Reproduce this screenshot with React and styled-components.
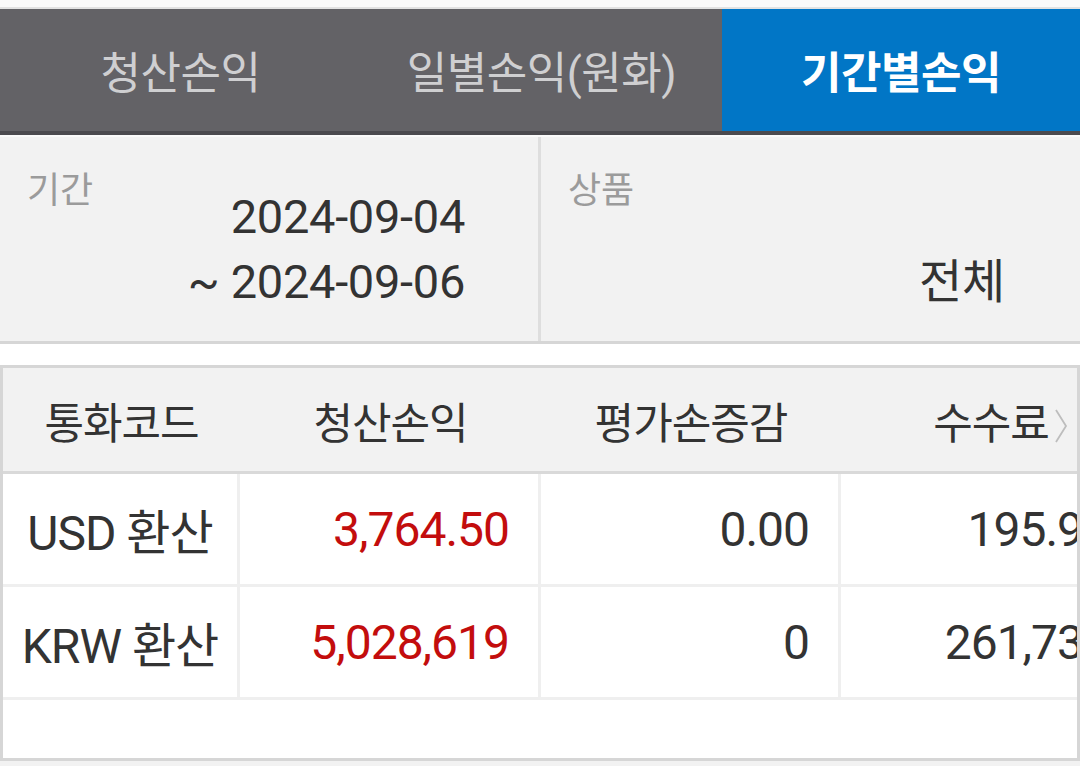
import React from "react";
import styled, { createGlobalStyle } from "styled-components";

const font = `"Roboto", "Noto Sans CJK KR", sans-serif`;

const GlobalStyle = createGlobalStyle`
  * { box-sizing: border-box; }
  body {
    margin: 0;
    background: #fafafa;
    font-family: ${font};
    color: #333333;
  }
`;

const Page = styled.div`
  width: 1080px;
  height: 766px;
  overflow: hidden;
  padding-top: 7px;
  background: #fafafa;
`;

const TabBar = styled.div`
  display: grid;
  grid-template-columns: 361px 361px 1fr;
  height: 128px;
  border-top: 2px solid #e2e2e2;
  border-bottom: 4px solid #4b4a4e;
  background: #636266;
`;

const Tab = styled.div`
  display: flex;
  align-items: center;
  justify-content: center;
  font-size: 44px;
  letter-spacing: -0.5px;
  font-weight: ${(p) => (p.$active ? 700 : 400)};
  color: ${(p) => (p.$active ? "#ffffff" : "#cfcfd1")};
  background: ${(p) => (p.$active ? "#0176c6" : "transparent")};
`;

const Filter = styled.div`
  display: grid;
  grid-template-columns: 538px 1fr;
  height: 209px;
  border-top: 2px solid #fafafa;
  border-bottom: 3px solid #d6d6d6;
  background: #f2f2f2;
`;

const FilterPanel = styled.div`
  display: flex;
  justify-content: space-between;
  padding: 36px ${(p) => p.$padRight}px 27px 27px;
  border-left: ${(p) => (p.$divided ? "3px solid #dedede" : "none")};
`;

const FilterLabel = styled.div`
  align-self: flex-start;
  font-size: 36px;
  line-height: 36px;
  color: #9b9b9b;
`;

const FilterValue = styled.div`
  align-self: flex-end;
  text-align: right;
  font-size: 47px;
  line-height: 65px;
  letter-spacing: -0.3px;
  color: #333333;
`;

const Gap = styled.div`
  height: 21px;
  background: #ffffff;
`;

const TableWrap = styled.div`
  position: relative;
  overflow: hidden;
  width: 1080px;
  border: 3px solid #d6d6d6;
  background: #ffffff;
`;

const Row = styled.div`
  display: grid;
  grid-template-columns: 237px 301px 300px 300px;
  width: 1138px;
  height: ${(p) => p.$height}px;
  background: ${(p) => (p.$head ? "#f2f2f2" : "#ffffff")};
  border-bottom: 3px solid ${(p) => (p.$head ? "#d9d9d9" : "#efefef")};
`;

const HeadCell = styled.div`
  display: flex;
  align-items: center;
  justify-content: center;
  font-size: 43px;
  letter-spacing: -1px;
  color: #333333;
`;

const Cell = styled.div`
  display: flex;
  align-items: center;
  justify-content: ${(p) => (p.$center ? "center" : "flex-end")};
  padding-right: ${(p) => (p.$center ? 0 : 29)}px;
  border-right: 3px solid #efefef;
  font-size: 48px;
  letter-spacing: -1px;
  color: ${(p) => (p.$red ? "#c30d0d" : "#333333")};
`;

const EmptySpace = styled.div`
  height: 58px;
`;

const ScrollHint = styled.div`
  position: absolute;
  top: 40px;
  right: 9px;
  width: 14px;
  height: 36px;
  display: flex;
`;

const Footer = styled.div`
  height: 30px;
  background: #f2f2f2;
`;

const rows = [
  { code: "USD 환산", pnl: "3,764.50", eval: "0.00", fee: "195.96" },
  { code: "KRW 환산", pnl: "5,028,619", eval: "0", fee: "261,739" },
];

export default function App() {
  return (
    <>
      <GlobalStyle />
      <Page>
        <TabBar>
          <Tab>청산손익</Tab>
          <Tab>일별손익(원화)</Tab>
          <Tab $active>기간별손익</Tab>
        </TabBar>
        <Filter>
          <FilterPanel $padRight={73}>
            <FilterLabel>기간</FilterLabel>
            <FilterValue>
              2024-09-04
              <br />~ 2024-09-06
            </FilterValue>
          </FilterPanel>
          <FilterPanel $padRight={75} $divided>
            <FilterLabel>상품</FilterLabel>
            <FilterValue>전체</FilterValue>
          </FilterPanel>
        </Filter>
        <Gap />
        <TableWrap>
          <Row $head $height={106}>
            <HeadCell>통화코드</HeadCell>
            <HeadCell>청산손익</HeadCell>
            <HeadCell>평가손증감</HeadCell>
            <HeadCell>수수료</HeadCell>
          </Row>
          {rows.map((r) => (
            <Row key={r.code} $height={113}>
              <Cell $center>{r.code}</Cell>
              <Cell $red>{r.pnl}</Cell>
              <Cell>{r.eval}</Cell>
              <Cell>{r.fee}</Cell>
            </Row>
          ))}
          <EmptySpace />
          <ScrollHint>
            <svg width="14" height="36" viewBox="0 0 14 36">
              <polyline
                points="2,2 12,18 2,34"
                fill="none"
                stroke="#bdbdbd"
                strokeWidth="1.8"
              />
            </svg>
          </ScrollHint>
        </TableWrap>
        <Footer />
      </Page>
    </>
  );
}
